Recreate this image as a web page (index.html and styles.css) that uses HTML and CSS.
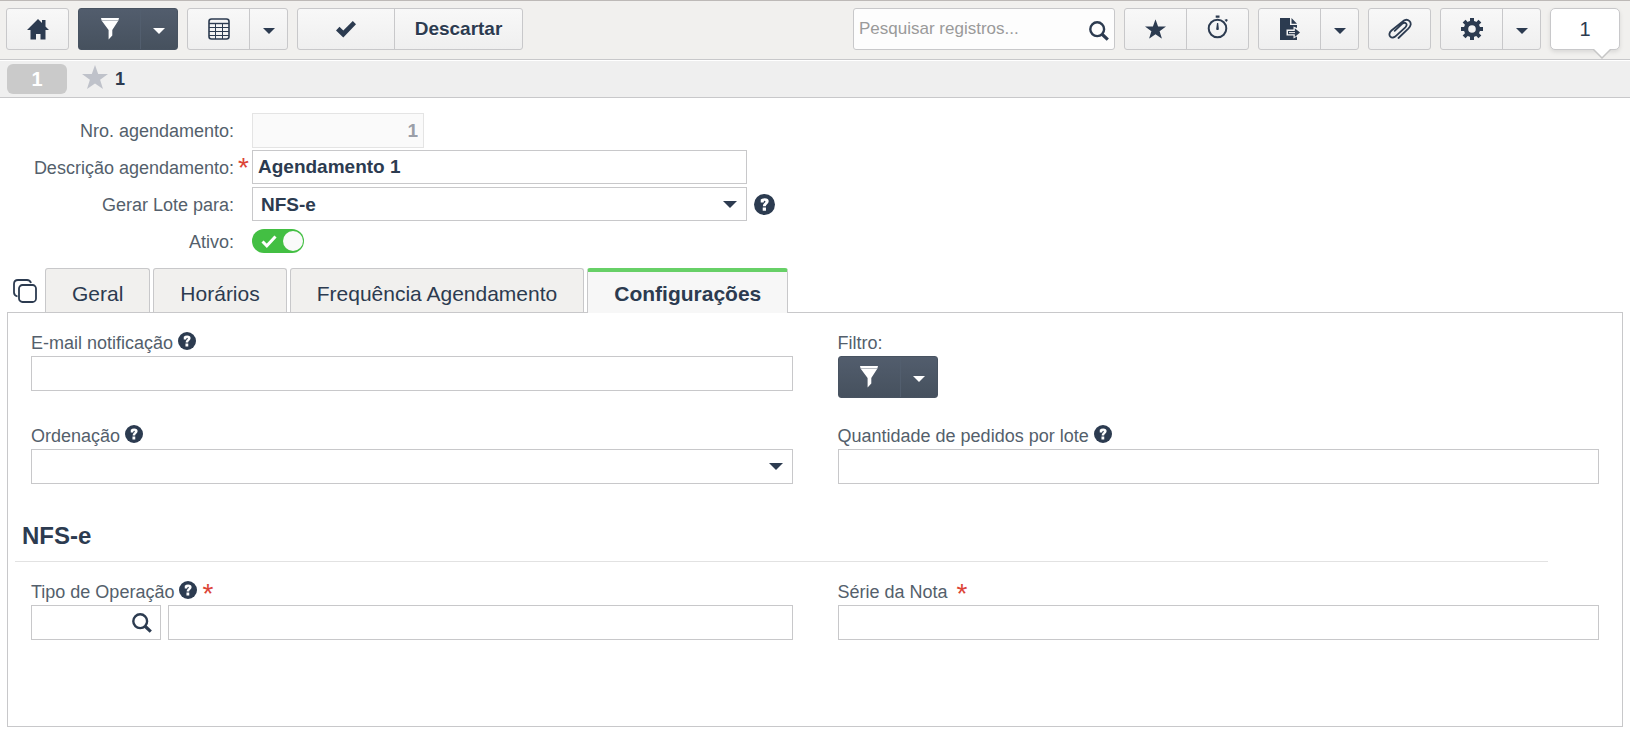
FILE: index.html
```html
<!DOCTYPE html>
<html lang="pt-BR">
<head>
<meta charset="utf-8">
<meta name="viewport" content="width=device-width, initial-scale=1">
<title>Agendamento</title>
<link rel="stylesheet" href="styles.css">
</head>
<body>
<svg class="sprite" aria-hidden="true">
  <symbol id="caret" viewBox="0 0 14 7"><path d="M0 0h14L7 7z"/></symbol>
  <symbol id="funnel" viewBox="0 0 20 22"><path d="M1 0h18l-.5 2h-17zM1.900 3h16.200L12.300 12v5.500L8.600 21.500V12z"/><path d="M1.500 2h17v1h-17z" opacity=".6"/></symbol>
  <symbol id="search" viewBox="0 0 20 20"><circle cx="8.200" cy="8.200" r="6.900" fill="none" stroke="currentColor" stroke-width="2.400"/><path d="M12.800 13l6 5.600" stroke="currentColor" stroke-width="3.200"/></symbol>
  <symbol id="star" viewBox="0 0 26 24"><path d="M13 0l3.200 9H26l-7.900 5.700L21 24l-8-5.600L5 24l2.900-9.300L0 9h9.800z"/></symbol>
  <symbol id="help" viewBox="0 0 20 20"><circle cx="10" cy="10" r="10"/><path d="M6.400 8.200V5.200Q7.800 4 10.200 4q3.800 0 3.800 3 0 1.700-1.600 2.700-1.100.7-1.100 2H8.500q-.1-2.200 1.400-3.200 1-.6 1-1.300 0-.7-.8-.7-.8 0-1 1.700zM8.300 12.900h3.100V16H8.300z" fill="#fff"/></symbol>
</svg>

<header class="toolbar">
  <div class="group">
    <button class="btn" type="button" aria-label="Início"><svg width="22" height="22" viewBox="0 0 22 22"><path d="M11 1L0 12h3.500v9.500H9V16h4.500v5.500h5V12H22l-3.500-3.600V2H15v3z"/></svg></button>
  </div>
  <div class="group dark">
    <button class="btn" type="button" aria-label="Filtro"><svg width="20" height="22"><use href="#funnel"/></svg></button>
    <button class="btn drop" type="button" aria-label="Opções de filtro"><svg width="12" height="6"><use href="#caret"/></svg></button>
  </div>
  <div class="group">
    <button class="btn" type="button" aria-label="Modo grade"><svg width="22" height="22" viewBox="0 0 22 22"><g fill="none" stroke="currentColor"><rect x="1" y="1" width="20" height="20" rx="2.500" stroke-width="1.600"/><path d="M1 5.500h20" stroke-width="1.400"/><path d="M1 9.500h20M1 13.500h20M1 17.500h20M7.500 5.500V21M14.500 5.500V21"/></g></svg></button>
    <button class="btn drop" type="button" aria-label="Opções de grade"><svg width="12" height="6"><use href="#caret"/></svg></button>
  </div>
  <div class="group">
    <button class="btn save" type="button" aria-label="Salvar"><svg width="20" height="17" viewBox="0 0 20 17"><path d="M0 9.500l3.500-3.800 3.800 3.700L16.800 0 20 3.200 7.300 16.500z"/></svg></button>
    <button class="btn discard" type="button">Descartar</button>
  </div>
  <div class="search">
    <input type="text" placeholder="Pesquisar registros..." aria-label="Pesquisar registros">
    <button type="button" aria-label="Pesquisar"><svg width="20" height="20"><use href="#search"/></svg></button>
  </div>
  <div class="group">
    <button class="btn" type="button" aria-label="Favoritos"><svg width="21" height="20" viewBox="0 0 26 24"><use href="#star"/></svg></button>
    <button class="btn" type="button" aria-label="Tempo"><svg class="raised" width="22" height="25" viewBox="0 0 22 25"><circle cx="10.500" cy="14.500" r="8.800" fill="none" stroke="currentColor" stroke-width="2"/><path d="M8.700 1.500h3.800v2.300H8.700zM17.500 5.800l2.600-.8.600 1.400-1.400 1.500zM10 9h1.200l.5 4.500q.6 2.600-1.200 2.600t-1.100-2.600z"/></svg></button>
  </div>
  <div class="group">
    <button class="btn" type="button" aria-label="Exportar"><svg width="20" height="22" viewBox="0 0 20 22"><path d="M0 0h10v7h7v3l-3.500-1.500v3H6.500v6h7v3l3.500-2V22H0zM11.500 0L17 5.800h-5.500z"/><path d="M8 13h6.800v-2.800L20 14.600l-5.200 4.400v-2.700H8z"/><path d="M9 14.600h6" stroke="#f4f4f4"/></svg></button>
    <button class="btn drop" type="button" aria-label="Opções de exportação"><svg width="12" height="6"><use href="#caret"/></svg></button>
  </div>
  <div class="group">
    <button class="btn" type="button" aria-label="Anexos"><svg width="24" height="22" viewBox="0 0 24 22"><path d="M10.500 20l9.800-9.300c2.700-2.700 3.200-5.600 1.200-7.600-2.100-2-5-1.700-7.700 1L3.500 12.500c-2.300 2.100-2.700 4.600-1.200 6.100s3.900 1.200 6-.9l9-8.400c1.500-1.500 1.700-3 .7-3.900-1-1-2.500-.8-3.900.5l-7.400 7" fill="none" stroke="currentColor" stroke-width="1.800" stroke-linecap="round"/></svg></button>
  </div>
  <div class="group">
    <button class="btn" type="button" aria-label="Configurar"><svg width="22" height="22" viewBox="-11 -11 22 22"><circle r="6" fill="none" stroke="currentColor" stroke-width="4.400"/><path d="M0-11V-7M0 7v4M-11 0h4M7 0h4M-7.900-7.900l3.200 3.200M7.900-7.900L4.700-4.700M-7.900 7.900l3.200-3.200M7.900 7.900L4.700 4.700" stroke="currentColor" stroke-width="4"/></svg></button>
    <button class="btn drop" type="button" aria-label="Opções de configuração"><svg width="12" height="6"><use href="#caret"/></svg></button>
  </div>
  <button class="counter" type="button">1<svg width="18" height="10" viewBox="0 0 18 10"><path d="M0 0l9 9 9-9" fill="#fff" stroke="#c6c6c6" stroke-width="1.500"/></svg></button>
</header>

<div class="record-bar">
  <span class="record-badge">1</span>
  <svg class="record-star" width="26" height="24"><use href="#star"/></svg>
  <span class="record-title">1</span>
</div>

<main class="content">
  <div class="form">
    <div class="form-row">
      <label for="numero">Nro. agendamento:</label>
      <span class="required"></span>
      <input class="field number" id="numero" type="text" value="1" disabled>
    </div>
    <div class="form-row">
      <label for="descricao">Descrição agendamento:</label>
      <span class="required">*</span>
      <input class="field wide" id="descricao" type="text" value="Agendamento 1" required>
    </div>
    <div class="form-row">
      <label for="lote">Gerar Lote para:</label>
      <span class="required"></span>
      <span class="select wide"><select class="field" id="lote"><option>NFS-e</option></select><svg width="14" height="7"><use href="#caret"/></svg></span>
      <svg class="help-large" width="21" height="21"><use href="#help"/></svg>
    </div>
    <div class="form-row">
      <label for="ativo">Ativo:</label>
      <span class="required"></span>
      <span class="switch"><input id="ativo" type="checkbox" checked><svg width="16" height="13" viewBox="0 0 16 13"><path d="M1.500 6.500l4.300 4.300L14.500 1.500" fill="none" stroke="#fff" stroke-width="3"/></svg></span>
    </div>
  </div>

  <div class="tabs-row">
    <button class="copy" type="button" aria-label="Abas"><svg width="24" height="24" viewBox="0 0 24 24"><g fill="none" stroke="currentColor" stroke-width="1.800"><rect x="6" y="6" width="17" height="17" rx="3.500"/><path d="M4.500 17.500Q1 16.500 1 13.500V5q0-4 4-4h9q3 0 4 3"/></g></svg></button>
    <div class="tabs" role="tablist">
      <button class="tab" type="button" role="tab" aria-selected="false">Geral</button>
      <button class="tab" type="button" role="tab" aria-selected="false">Horários</button>
      <button class="tab" type="button" role="tab" aria-selected="false">Frequência Agendamento</button>
      <button class="tab active" type="button" role="tab" aria-selected="true">Configurações</button>
    </div>
  </div>

  <section class="panel">
    <div class="grid">
      <div class="cell">
        <div class="caption"><label for="email">E-mail notificação</label><svg class="help" width="18" height="18"><use href="#help"/></svg></div>
        <input class="field" id="email" type="text">
      </div>
      <div class="cell">
        <div class="caption"><span>Filtro:</span></div>
        <div class="group dark">
          <button class="btn" type="button" aria-label="Filtro"><svg width="20" height="22"><use href="#funnel"/></svg></button>
          <button class="btn drop" type="button" aria-label="Opções de filtro"><svg width="12" height="6"><use href="#caret"/></svg></button>
        </div>
      </div>
      <div class="cell">
        <div class="caption"><label for="ordem">Ordenação</label><svg class="help" width="18" height="18"><use href="#help"/></svg></div>
        <span class="select"><select class="field" id="ordem"><option></option></select><svg width="14" height="7"><use href="#caret"/></svg></span>
      </div>
      <div class="cell">
        <div class="caption"><label for="quantidade">Quantidade de pedidos por lote</label><svg class="help" width="18" height="18"><use href="#help"/></svg></div>
        <input class="field" id="quantidade" type="text">
      </div>
    </div>
    <h2 class="section-title">NFS-e</h2>
    <div class="grid">
      <div class="cell">
        <div class="caption"><label for="tipo">Tipo de Operação</label><svg class="help" width="18" height="18"><use href="#help"/></svg><span class="mark">*</span></div>
        <div class="lookup">
          <span class="lookup-code"><input class="field" id="tipo" type="text"><button type="button" aria-label="Buscar operação"><svg width="20" height="20"><use href="#search"/></svg></button></span>
          <input class="field" type="text" aria-label="Descrição da operação">
        </div>
      </div>
      <div class="cell">
        <div class="caption"><label for="serie">Série da Nota</label><span class="mark spaced">*</span></div>
        <input class="field" id="serie" type="text">
      </div>
    </div>
  </section>
</main>
</body>
</html>
```
FILE: styles.css
```css
:root {
  --ink: #2c3b50;
  --label: #545f6c;
  --line: #c8c8ca;
  --red: #dc4437;
}

* {
  box-sizing: border-box;
}

body {
  margin: 0;
  min-height: 100vh;
  display: flex;
  flex-direction: column;
  background: #fff;
  color: var(--ink);
  font-family: "Liberation Sans", Arial, sans-serif;
  font-size: 18px;
}

button,
input,
select {
  margin: 0;
  font: inherit;
  color: inherit;
}

button {
  padding: 0;
  border: 0;
  background: none;
}

svg {
  display: block;
  flex: none;
  fill: currentColor;
}

.sprite {
  position: absolute;
  width: 0;
  height: 0;
}

/* Toolbar */

.toolbar {
  display: flex;
  align-items: flex-start;
  gap: 9px;
  height: 60px;
  padding: 7px 10px 0 6px;
  border-top: 1px solid #bdb9b7;
  border-bottom: 1px solid var(--line);
  background: #f1f0ee;
}

.group {
  display: flex;
  height: 42px;
  border: 1px solid var(--line);
  border-radius: 3px;
  background: linear-gradient(#f8f8f8, #efefef);
  text-shadow: 0 1px 0 #fff;
}

.btn {
  display: flex;
  align-items: center;
  justify-content: center;
  width: 61px;
  text-shadow: inherit;
}

.btn + .btn {
  width: 62px;
  border-left: 1px solid var(--line);
}

.btn + .drop {
  width: 38px;
}

.btn.save {
  width: 96px;
}

.btn + .discard {
  width: 128px;
  font-size: 19px;
  font-weight: bold;
}

.drop svg {
  margin-top: 4px;
}

.raised {
  margin-bottom: 5px;
}

.dark {
  border-color: #485361;
  background: linear-gradient(#525d6d, #46515e);
  color: #fff;
}

.dark .btn + .btn {
  width: 37px;
  border-left-color: #525e6e;
}

.search {
  display: flex;
  align-items: center;
  width: 262px;
  height: 42px;
  margin-left: auto;
  padding: 0 5px;
  border: 1px solid var(--line);
  border-radius: 3px;
  background: #fdfdfd;
}

.search input {
  flex: 1;
  min-width: 0;
  padding: 0;
  border: 0;
  background: none;
  font-size: 17px;
}

.search input::placeholder {
  color: #9a9a9a;
}

.search button {
  padding-top: 3px;
}

.counter {
  position: relative;
  width: 70px;
  height: 42px;
  border: 1px solid var(--line);
  border-radius: 5px;
  background: #fff;
  box-shadow: 0 2px 4px #0000001a;
  font-size: 20px;
}

.counter svg {
  position: absolute;
  top: 40px;
  right: 8px;
}

/* Current record */

.record-bar {
  display: flex;
  align-items: center;
  height: 38px;
  padding: 0 7px;
  border-top: 1px solid #fff;
  border-bottom: 1px solid var(--line);
  background: #efefef;
}

.record-badge {
  width: 60px;
  height: 30px;
  border-radius: 6px;
  background: #cacaca;
  color: #fff;
  font-size: 20px;
  font-weight: bold;
  line-height: 30px;
  text-align: center;
}

.record-star {
  margin: 0 7px 4px 15px;
  color: #bfc2ca;
}

.record-title {
  font-weight: bold;
}

/* Form */

.content {
  flex: 1;
  display: flex;
  flex-direction: column;
  padding: 15px 7px 6px;
}

.form {
  padding-bottom: 7px;
}

.form-row {
  display: flex;
  align-items: flex-start;
  height: 37px;
}

.form-row label {
  width: 227px;
  color: var(--label);
  line-height: 36px;
  text-align: right;
}

.required {
  width: 18px;
  padding-left: 4px;
  color: var(--red);
  font-size: 28px;
  line-height: 36px;
}

.field {
  width: 100%;
  height: 35px;
  padding: 0 5px;
  border: 1px solid var(--line);
  border-radius: 0;
  background: #fff;
  font-size: 19px;
  font-weight: bold;
}

.form .field {
  height: 34px;
}

.form .number {
  width: 172px;
  height: 35px;
  border-color: #e4e4e4;
  background: #fafafa;
  color: #9b9fa8;
  text-align: right;
}

.form .wide {
  width: 495px;
}

.select {
  display: grid;
  align-items: center;
}

.select .field {
  grid-area: 1 / 1;
  appearance: none;
  padding: 0 8px;
}

.select svg {
  grid-area: 1 / 1;
  justify-self: end;
  margin-right: 10px;
  pointer-events: none;
}

.help-large {
  margin: 7px 0 0 7px;
}

.switch {
  display: grid;
  align-items: center;
  height: 34px;
}

.switch input {
  grid-area: 1 / 1;
  appearance: none;
  display: flex;
  justify-content: flex-end;
  width: 52px;
  height: 24px;
  padding: 2px 1px;
  border-radius: 12px;
  background: #43bf43;
}

.switch input::before {
  content: "";
  width: 20px;
  height: 20px;
  border-radius: 50%;
  background: #fafafa;
}

.switch svg {
  grid-area: 1 / 1;
  margin-left: 9px;
  pointer-events: none;
}

/* Tabs */

.tabs-row {
  display: flex;
  height: 44px;
  padding-left: 6px;
}

.copy {
  width: 32px;
  padding-top: 11px;
  align-self: flex-start;
}

.tabs {
  display: flex;
  gap: 3px;
}

.tab {
  height: 44px;
  padding: 7px 26px 0;
  border: 1px solid var(--line);
  border-bottom: 0;
  border-radius: 3px 3px 0 0;
  background: #f1f0ee;
  font-size: 21px;
  line-height: 34px;
}

.tab.active {
  position: relative;
  height: 45px;
  padding-top: 3px;
  border-top: 4px solid #67d067;
  background: #f7f7f7;
  font-weight: bold;
}

/* Panel */

.panel {
  flex: 1;
  padding-top: 17px;
  border: 1px solid var(--line);
}

.grid {
  display: grid;
  grid-template-columns: 1fr 1fr;
  gap: 25px 45px;
  padding: 0 23px;
}

.cell .group {
  width: max-content;
}

.caption {
  display: flex;
  align-items: flex-start;
  height: 26px;
  color: var(--label);
  line-height: 26px;
}

.help {
  margin: 2px 0 0 5px;
  color: var(--ink);
}

.mark {
  margin-left: 5px;
  color: var(--red);
  font-size: 28px;
  line-height: 30px;
}

.mark.spaced {
  margin-left: 9px;
}

.section-title {
  width: 95%;
  margin: 38px 7px 17px;
  padding: 0 7px 11px;
  border-bottom: 1px solid #e2e2e2;
  font-size: 24px;
  line-height: 28px;
}

.lookup {
  display: flex;
  gap: 7px;
}

.lookup-code {
  flex: none;
  display: grid;
  align-items: center;
  width: 130px;
}

.lookup-code .field,
.lookup-code button {
  grid-area: 1 / 1;
}

.lookup-code button {
  justify-self: end;
  margin-right: 9px;
}
```
